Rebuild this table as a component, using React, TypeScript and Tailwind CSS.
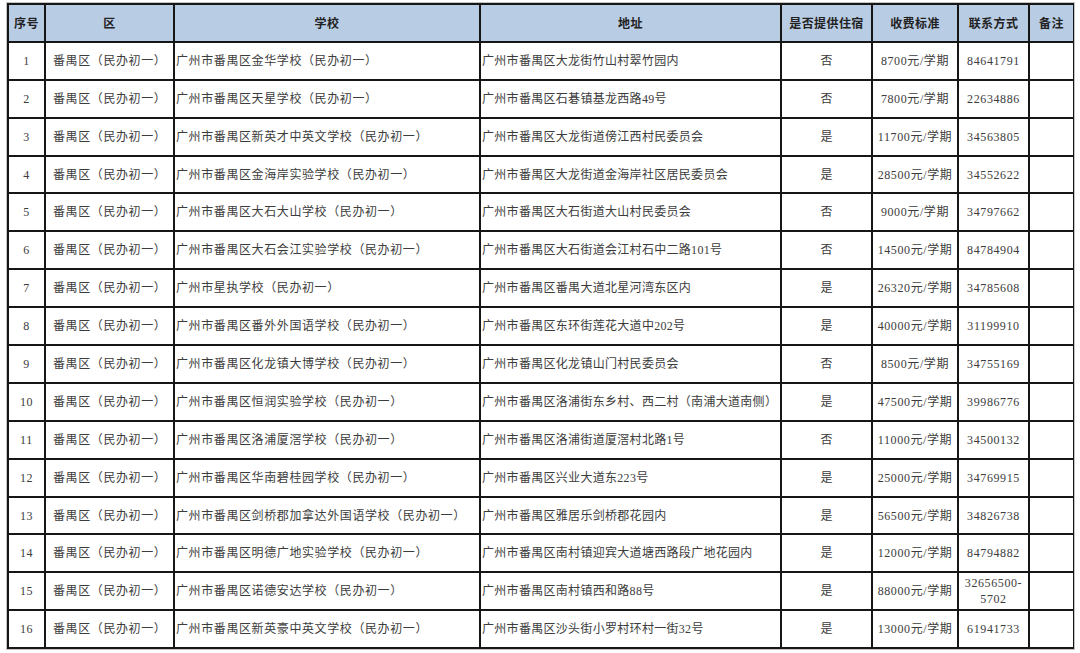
import React from 'react';

type Row = {
  school: string;
  addr: string;
  stay: '是' | '否';
  fee: string;
  phone: string[];
};

const P = '广州市番禺区';

const ROWS: Row[] = [
  { school: P + '金华学校（民办初一）', addr: P + '大龙街竹山村翠竹园内', stay: '否', fee: '8700', phone: ['84641791'] },
  { school: P + '天星学校（民办初一）', addr: P + '石碁镇基龙西路49号', stay: '否', fee: '7800', phone: ['22634886'] },
  { school: P + '新英才中英文学校（民办初一）', addr: P + '大龙街道傍江西村民委员会', stay: '是', fee: '11700', phone: ['34563805'] },
  { school: P + '金海岸实验学校（民办初一）', addr: P + '大龙街道金海岸社区居民委员会', stay: '是', fee: '28500', phone: ['34552622'] },
  { school: P + '大石大山学校（民办初一）', addr: P + '大石街道大山村民委员会', stay: '否', fee: '9000', phone: ['34797662'] },
  { school: P + '大石会江实验学校（民办初一）', addr: P + '大石街道会江村石中二路101号', stay: '否', fee: '14500', phone: ['84784904'] },
  { school: '广州市星执学校（民办初一）', addr: P + '番禺大道北星河湾东区内', stay: '是', fee: '26320', phone: ['34785608'] },
  { school: P + '番外外国语学校（民办初一）', addr: P + '东环街莲花大道中202号', stay: '是', fee: '40000', phone: ['31199910'] },
  { school: P + '化龙镇大博学校（民办初一）', addr: P + '化龙镇山门村民委员会', stay: '否', fee: '8500', phone: ['34755169'] },
  { school: P + '恒润实验学校（民办初一）', addr: P + '洛浦街东乡村、西二村（南浦大道南侧）', stay: '是', fee: '47500', phone: ['39986776'] },
  { school: P + '洛浦厦滘学校（民办初一）', addr: P + '洛浦街道厦滘村北路1号', stay: '否', fee: '11000', phone: ['34500132'] },
  { school: P + '华南碧桂园学校（民办初一）', addr: P + '兴业大道东223号', stay: '是', fee: '25000', phone: ['34769915'] },
  { school: P + '剑桥郡加拿达外国语学校（民办初一）', addr: P + '雅居乐剑桥郡花园内', stay: '是', fee: '56500', phone: ['34826738'] },
  { school: P + '明德广地实验学校（民办初一）', addr: P + '南村镇迎宾大道塘西路段广地花园内', stay: '是', fee: '12000', phone: ['84794882'] },
  { school: P + '诺德安达学校（民办初一）', addr: P + '南村镇西和路88号', stay: '是', fee: '88000', phone: ['32656500-', '5702'] },
  { school: P + '新英豪中英文学校（民办初一）', addr: P + '沙头街小罗村环村一街32号', stay: '是', fee: '13000', phone: ['61941733'] },
];

const HEAD = ['序号', '区', '学校', '地址', '是否提供住宿', '收费标准', '联系方式', '备注'];

const cell = 'bg-white flex items-center whitespace-nowrap overflow-hidden text-[12px] text-[#3c3c3c]';

export default function App() {
  return (
    <div
      className="min-h-screen bg-white pl-[7px] pt-[3px]"
      style={{ fontFamily: '"Liberation Serif", "Noto Sans CJK SC", serif' }}
    >
      <div className="inline-grid w-[1067px] grid-cols-[35px_127px_304px_299px_89px_84px_69px_43px] auto-rows-[35.9px] gap-[2px] bg-[#161616] p-[2px] shadow-[0_0_0_1px_#c4c4c4]">
        {HEAD.map((h) => (
          <div
            key={h}
            className="flex items-center justify-center bg-[#b8cce4] text-[12px] font-bold tracking-[0.4px] text-[#222]"
            style={{ fontFamily: '"Noto Sans CJK SC", sans-serif' }}
          >
            {h}
          </div>
        ))}
        {ROWS.map((r, i) => (
          <React.Fragment key={i}>
            <div className={cell + ' justify-center tracking-[0.6px]'}>{i + 1}</div>
            <div className={cell + ' pl-[7px] tracking-[0.6px]'}>番禺区（民办初一）</div>
            <div className={cell + ' pl-[1px] tracking-[0.6px]'}>{r.school}</div>
            <div className={cell + ' pl-[1px] tracking-[0.3px]'}>{r.addr}</div>
            <div className={cell + ' justify-center'}>{r.stay}</div>
            <div className={cell + ' justify-center tracking-[0.6px]'}>{r.fee}元/学期</div>
            <div className={cell + ' flex-col items-center justify-center leading-[16px] tracking-[0.6px]'}>
              {r.phone.map((p) => (
                <span key={p}>{p}</span>
              ))}
            </div>
            <div className="bg-white" />
          </React.Fragment>
        ))}
      </div>
    </div>
  );
}
